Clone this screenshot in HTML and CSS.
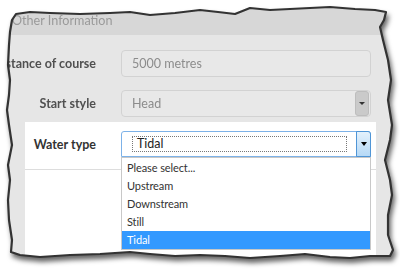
FILE: index.html
```html
<!DOCTYPE html>
<html>
<head>
<meta charset="utf-8">
<link rel="stylesheet" href="styles.css">
</head>
<body>
<div class="frame">
  <div class="sheet">
    <div class="header">Other Information</div>
    <div class="row">
      <div class="label">Distance of course</div>
      <div class="input">5000 metres</div>
    </div>
    <div class="row row-second">
      <div class="label">Start style</div>
      <div class="input select">
        <span>Head</span>
        <span class="btn-grey"><span class="arrow"></span></span>
      </div>
    </div>
    <div class="panel">
      <div class="row-active">
        <div class="label label-active">Water type</div>
        <div class="select-open">
          <div class="focus-box">Tidal</div>
          <div class="btn-blue"><span class="arrow arrow-black"></span></div>
        </div>
      </div>
      <ul class="listbox">
        <li>Please select...</li>
        <li>Upstream</li>
        <li>Downstream</li>
        <li>Still</li>
        <li class="selected">Tidal</li>
      </ul>
    </div>
  </div>
  <svg class="edge" width="400" height="270" viewBox="0 0 400 270">
    <polygon points="10,32 12,20 16,14 30,12 50,13 80,14 110,13 130,12 150,15 175,13 200,10 218,12 235,14 250,8 270,10 290,9 310,8 330,7 355,9 375,10 386,12 384,20 380,27 383,40 388,60 391,80 388,100 392,125 390,140 385,160 390,180 392,195 388,215 388,235 393,250 390,256 370,256 350,258 330,257 305,254 280,256 250,258 225,256 200,255 175,256 150,254 130,252 100,254 70,255 40,257 20,255 11,252 12,240 9,220 8,200 10,180 8,165 12,145 9,125 7,110 9,95 10,80 8,65 9,45" fill="none" stroke="#333333" stroke-width="2.2" stroke-linejoin="round"/>
  </svg>
</div>
</body>
</html>
```

FILE: styles.css
```css
html, body {
  margin: 0;
  padding: 0;
  background: #ffffff;
}

.frame {
  position: relative;
  width: 400px;
  height: 270px;
  filter: drop-shadow(2px 4px 2.5px rgba(0, 0, 0, 0.6));
}

.sheet {
  width: 400px;
  height: 270px;
  background: #e6e6e6;
  font-family: Lato, "Open Sans", sans-serif;
  overflow: hidden;
  clip-path: polygon(10px 32px, 12px 20px, 16px 14px, 30px 12px, 50px 13px, 80px 14px, 110px 13px, 130px 12px, 150px 15px, 175px 13px, 200px 10px, 218px 12px, 235px 14px, 250px 8px, 270px 10px, 290px 9px, 310px 8px, 330px 7px, 355px 9px, 375px 10px, 386px 12px, 384px 20px, 380px 27px, 383px 40px, 388px 60px, 391px 80px, 388px 100px, 392px 125px, 390px 140px, 385px 160px, 390px 180px, 392px 195px, 388px 215px, 388px 235px, 393px 250px, 390px 256px, 370px 256px, 350px 258px, 330px 257px, 305px 254px, 280px 256px, 250px 258px, 225px 256px, 200px 255px, 175px 256px, 150px 254px, 130px 252px, 100px 254px, 70px 255px, 40px 257px, 20px 255px, 11px 252px, 12px 240px, 9px 220px, 8px 200px, 10px 180px, 8px 165px, 12px 145px, 9px 125px, 7px 110px, 9px 95px, 10px 80px, 8px 65px, 9px 45px);
}

.edge {
  position: absolute;
  left: 0;
  top: 0;
  filter: blur(0.5px);
}

.header {
  height: 35px;
  box-sizing: border-box;
  padding: 12px 0 0 12px;
  background: #d7d7d7;
  color: #9a9a9a;
  font-size: 12.6px;
  line-height: 18px;
}

.row {
  display: grid;
  grid-template-columns: 96px 250px;
  column-gap: 25px;
  align-items: center;
  margin-top: 15px;
  height: 27px;
}

.row-second {
  margin-top: 13px;
}

.label {
  text-align: right;
  white-space: nowrap;
  font-size: 12.5px;
  font-weight: 700;
  color: #505050;
  direction: rtl;
}

.input {
  box-sizing: border-box;
  height: 27px;
  border: 1px solid #d2d2d2;
  border-radius: 4px;
  background: #e8e8e8;
  color: #8c8c8c;
  font-size: 12.5px;
  line-height: 25px;
  padding-left: 10px;
}

.select {
  display: flex;
  justify-content: space-between;
  align-items: center;
  padding-right: 1px;
}

.btn-grey {
  width: 14px;
  height: 25px;
  box-sizing: border-box;
  background: #cacaca;
  border: 1px solid #bdbdbd;
  border-radius: 3px;
  display: flex;
  align-items: center;
  justify-content: center;
}

.arrow {
  width: 0;
  height: 0;
  border-left: 3px solid transparent;
  border-right: 3px solid transparent;
  border-top: 3px solid #333;
}

.panel {
  position: relative;
  margin: 5px 0 0 25px;
  width: 351px;
  height: 160px;
  background: #ffffff;
}

.row-active {
  display: grid;
  grid-template-columns: 71px 250px;
  column-gap: 25px;
  align-items: center;
  padding: 9px 0 12px;
  border-bottom: 1px solid #dddddd;
}

.label-active {
  color: #333;
  direction: ltr;
}

.select-open {
  box-sizing: border-box;
  height: 26px;
  border: 1px solid #7db2e8;
  border-radius: 3px 3px 0 0;
  background: #fff;
  display: flex;
  align-items: center;
  justify-content: space-between;
  padding-left: 10px;
}

.focus-box {
  box-sizing: border-box;
  width: 215px;
  height: 16px;
  border: 1px dotted #777;
  font-size: 12.5px;
  line-height: 14px;
  color: #222;
  padding-left: 4px;
}

.btn-blue {
  box-sizing: border-box;
  width: 15px;
  height: 26px;
  margin: -1px -1px -1px 0;
  border: 1px solid #4f95d6;
  border-radius: 0 3px 0 0;
  background: linear-gradient(#e3f1fc, #b6d9f6);
  display: flex;
  align-items: center;
  justify-content: center;
}

.arrow-black {
  border-left: 3.5px solid transparent;
  border-right: 3.5px solid transparent;
  border-top: 4px solid #000;
}

.listbox {
  position: absolute;
  left: 96px;
  top: 35px;
  width: 250px;
  box-sizing: border-box;
  margin: 0;
  padding: 1px 0 0;
  list-style: none;
  background: #fff;
  border: 1px solid #c8c8c8;
  font-size: 11px;
  letter-spacing: -0.1px;
  color: #333;
}

.listbox li {
  height: 18px;
  line-height: 18px;
  padding-left: 5px;
}

.listbox .selected {
  background: #3399ff;
  color: #fff;
}
```
